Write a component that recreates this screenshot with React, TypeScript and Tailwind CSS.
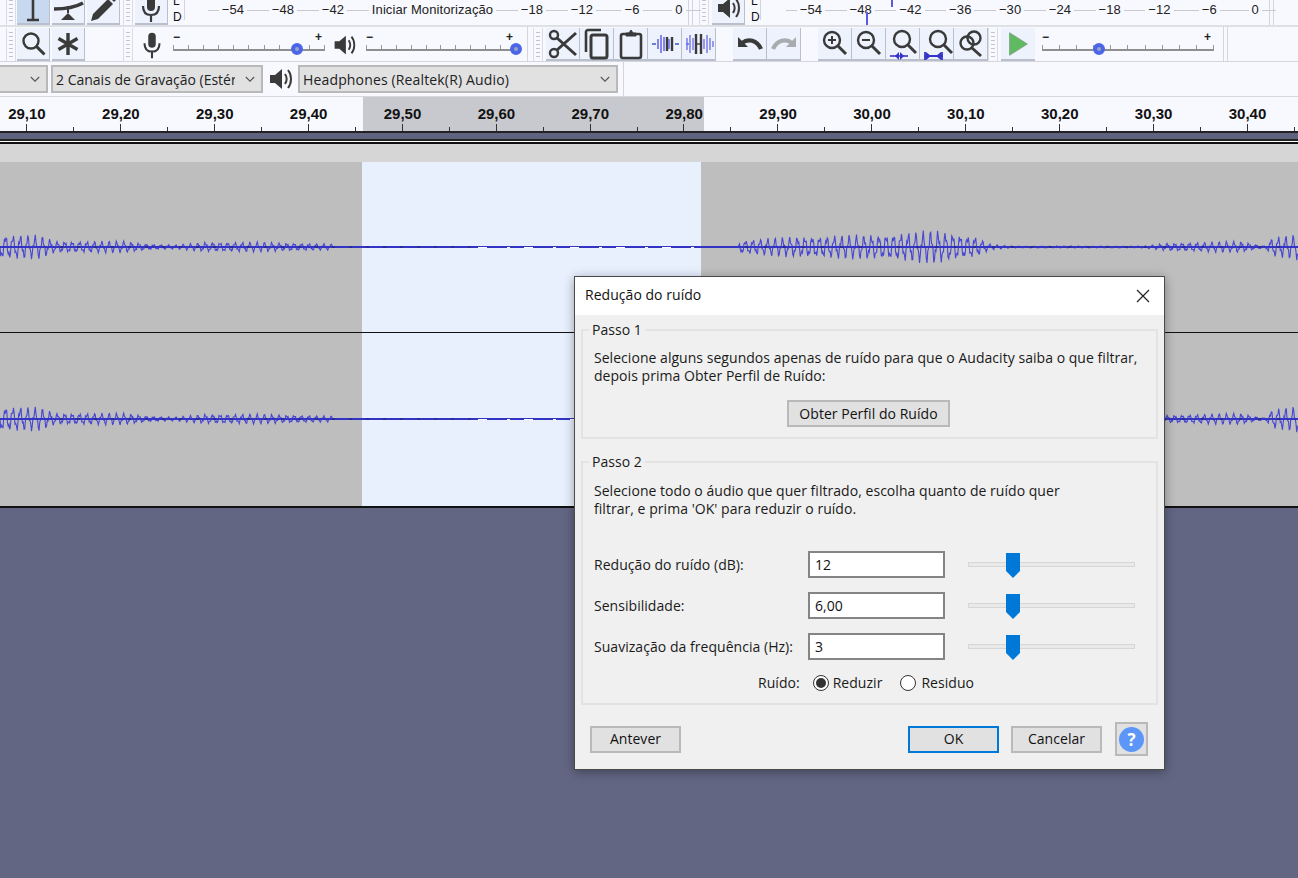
import type { ReactNode } from "react";

// ─── Toolbar bits ─────────────────────────────────────────────────────────────

const ink = "#3a3a3a";

function Grip() {
  return (
    <div className="w-[10px] h-[33px] shrink-0 border-x border-[#dcdde4] flex flex-col justify-center gap-[3px] px-[2px]">
      {[0, 1, 2, 3, 4, 5, 6].map((i) => (
        <div key={i} className="h-px bg-[#c4c5cb]" />
      ))}
    </div>
  );
}

function ToolBtn({ children, active, wide, className = "" }: { children?: ReactNode; active?: boolean; wide?: boolean; className?: string }) {
  return (
    <div
      className={`h-[33px] shrink-0 flex items-center justify-center border-b-2 border-r border-[#b9bfcc] ${wide ? "w-[34px]" : "w-[33px]"} ${
        active ? "bg-[#c8d8ef]" : "bg-[#edf2fd]"
      } ${className}`}
    >
      <svg viewBox="0 0 32 32" className="w-[32px] h-[32px]" fill="none" stroke={ink} strokeWidth="2.6">
        {children}
      </svg>
    </div>
  );
}

function DoubleLine({ className = "" }: { className?: string }) {
  return <div className={`w-[5px] h-full shrink-0 border-x border-[#d4d5da] ${className}`} />;
}

const micIcon = (
  <>
    <rect x="12" y="3" width="8" height="16" rx="4" fill={ink} stroke="none" />
    <path d="M8 14c0 6 3 9 8 9s8-3 8-9M16 23v7" strokeWidth="2.2" />
  </>
);

const speakerIcon = (
  <>
    <path d="M6 12h5l7-6v20l-7-6H6z" fill={ink} stroke="none" />
    <path d="M21 11c2 3 2 7 0 10M24 7c4 5 4 13 0 18" strokeWidth="2" />
  </>
);

function PlainIcon({ children, className = "" }: { children: ReactNode; className?: string }) {
  return (
    <svg viewBox="0 0 32 32" className={`shrink-0 ${className}`} fill="none" stroke={ink} strokeWidth="2.4">
      {children}
    </svg>
  );
}

function Glass({ cx = 14, cy = 13, r = 8 }: { cx?: number; cy?: number; r?: number }) {
  return (
    <>
      <circle cx={cx} cy={cy} r={r} strokeWidth="2.4" />
      <path d={`M${cx + r * 0.72} ${cy + r * 0.72}L${cx + r + 6} ${cy + r + 6}`} strokeWidth="3" />
    </>
  );
}

function ToolSlider({ width, thumb, ticks }: { width: string; thumb: string; ticks: number }) {
  return (
    <div className={`relative shrink-0 h-[33px] flex flex-col ${width}`}>
      <div className="flex justify-between text-[12px] leading-[14px] font-bold text-[#222] pt-[2px] pr-[3px] h-[16px] font-['Liberation_Sans',sans-serif]">
        <span>−</span>
        <span>+</span>
      </div>
      <div className="mt-[2px] h-[5px] flex justify-between items-end border-b-2 border-[#8f8f8f]">
        {Array.from({ length: ticks }).map((_, i) => (
          <div key={i} className="w-px h-[4px] bg-[#9a9a9a]" />
        ))}
      </div>
      <div className={`absolute top-[15px] w-[12px] h-[12px] rounded-full bg-[#4c66e8] border-[3px] border-[#4c66e8] flex items-center justify-center ${thumb}`}>
        <div className="w-[4px] h-[4px] rounded-full bg-[#9aa3c8]" />
      </div>
    </div>
  );
}

function ScaleCell({ label, className = "w-[50px]" }: { label: string; className?: string }) {
  return (
    <div className={`flex items-center shrink-0 ${className}`}>
      <div className="flex-1 h-px bg-[#c9cad0]" />
      <span className="px-[3px] whitespace-nowrap">{label}</span>
      <div className="flex-1 h-px bg-[#c9cad0]" />
    </div>
  );
}

function LD() {
  return (
    <div className="w-[9px] shrink-0 flex flex-col text-[12px] leading-[16px] text-[#111] font-['Liberation_Sans',sans-serif]">
      <span>L</span>
      <span>D</span>
    </div>
  );
}

function Combo({ text, className, textClass }: { text: string; className: string; textClass: string }) {
  return (
    <div className={`h-[28px] shrink-0 flex items-center justify-between bg-[#e1e1e1] border-2 border-[#b9b9b9] text-[14px] text-[#222] ${className}`}>
      <span className={`overflow-hidden whitespace-nowrap pl-[3px] ${textClass}`}>{text}</span>
      <svg viewBox="0 0 12 8" className="w-[10px] h-[7px] mr-[6px] shrink-0" fill="none" stroke="#555" strokeWidth="1.3">
        <path d="M1 1l5 5 5-5" />
      </svg>
    </div>
  );
}

// ─── Waveform ─────────────────────────────────────────────────────────────────

// envelope as [x, half height] pairs, read off the picture
const envelope: [number, number][] = [
  [0, 13], [40, 12], [55, 6], [125, 6], [150, 3], [175, 2], [205, 5], [260, 5], [333, 3], [334, 0],
  [738, 0], [740, 7], [800, 11], [880, 13], [935, 17], [975, 11], [990, 3], [1010, 1], [1145, 1],
  [1165, 4], [1240, 6], [1265, 1], [1272, 10], [1298, 13],
];

function envAt(x: number) {
  for (let i = 1; i < envelope.length; i++) {
    const [x1, y1] = envelope[i];
    if (x <= x1) {
      const [x0, y0] = envelope[i - 1];
      return y0 + ((y1 - y0) * (x - x0)) / (x1 - x0 || 1);
    }
  }
  return 0;
}

function wavePath(mid: number) {
  let d = `M0 ${mid}`;
  for (let x = 0; x < 1298; x += 0.75) {
    const env = envAt(x);
    const t = (x * Math.PI * 2) / 7.4;
    const s = 0.72 * Math.sin(t) + 0.3 * Math.sin(t * 3.1);
    d += `L${x} ${(mid + env * s).toFixed(1)}`;
  }
  return d;
}

function Channel({ mid, height }: { mid: number; height: number }) {
  return (
    <svg width="1298" height={height} className="block">
      <path d={wavePath(mid)} stroke="#4646d2" strokeWidth="1.1" fill="none" />
      <path d={`M0 ${mid}H1298`} stroke="#3434c4" strokeWidth="2" />
      <path d={`M60 ${mid}H480`} stroke="#22226a" strokeWidth="1" strokeDasharray="3 14" />
      <path d={`M478 ${mid + 0.5}H705`} stroke="#fff" strokeWidth="1" strokeDasharray="9 20 3 14" />
      <path d={`M745 ${mid}H1290`} stroke="#22226a" strokeWidth="1" strokeDasharray="3 16" />
    </svg>
  );
}

// ─── Dialog bits ──────────────────────────────────────────────────────────────

function DlgButton({ children, primary, className = "" }: { children: ReactNode; primary?: boolean; className?: string }) {
  return (
    <div
      className={`h-[27px] shrink-0 flex items-center justify-center bg-[#e1e1e1] border-2 text-[#111] ${
        primary ? "border-[#0078d7]" : "border-[#b9b9b9]"
      } ${className}`}
    >
      {children}
    </div>
  );
}

function Group({ title, className, children }: { title: string; className: string; children: ReactNode }) {
  return (
    <div className={`relative border-2 border-[#e3e3e3] pl-[11px] ${className}`}>
      <span className="absolute left-[6px] -top-[10px] px-[3px] bg-[#f0f0f0] leading-[18px]">{title}</span>
      {children}
    </div>
  );
}

function ParamRow({ label, value }: { label: string; value: string }) {
  return (
    <div className="flex items-center h-[27px]">
      <span className="w-[214px] shrink-0 whitespace-nowrap">{label}</span>
      <div className="w-[137px] h-[27px] shrink-0 bg-white border-2 border-[#858585] pl-[5px] flex items-center text-[#111]">{value}</div>
      <div className="relative ml-[23px] w-[167px] h-[27px] flex items-center">
        <div className="w-full h-[5px] bg-[#e7eae7] border border-[#d6d6d6]" />
        <svg viewBox="0 0 14 25" className="absolute left-[38px] top-[2px] w-[14px] h-[25px]">
          <path d="M0 0h14v18l-7 7-7-7z" fill="#0078d7" />
        </svg>
      </div>
    </div>
  );
}

function Radio({ on }: { on?: boolean }) {
  return (
    <div className="w-[16px] h-[16px] shrink-0 rounded-full bg-white border border-[#333] flex items-center justify-center">
      {on && <div className="w-[10px] h-[10px] rounded-full bg-[#333]" />}
    </div>
  );
}

// ─── Page ─────────────────────────────────────────────────────────────────────

const rulerLabels = ["29,10", "29,20", "29,30", "29,40", "29,50", "29,60", "29,70", "29,80", "29,90", "30,00", "30,10", "30,20", "30,30", "30,40"];

export default function App() {
  return (
    <div className="relative w-[1298px] h-[878px] overflow-hidden bg-[#626683] font-['Open_Sans',sans-serif]">
      {/* Row 1: tools and meters, cut off by the top of the screenshot */}
      <div className="h-[27px] bg-[#f8f9ff] border-b-2 border-[#dfe0e4] flex items-end overflow-hidden pl-[6px]">
        <Grip />
        <ToolBtn active className="ml-px">
          <path d="M10 28h12M16 0v28" />
        </ToolBtn>
        <ToolBtn className="ml-[2px]">
          <path d="M2 17c10 0 20-1 29-6" strokeWidth="3.4" />
          <path d="M16 21l7 7H9z" fill={ink} stroke="none" />
          <path d="M16 14v7" strokeWidth="2" />
        </ToolBtn>
        <ToolBtn className="ml-[2px]">
          <path d="M6 22l15-15 5 5-15 15-7 2z" fill={ink} stroke="none" />
          <path d="M22 5l3-3 5 5-3 3z" fill={ink} stroke="none" />
        </ToolBtn>
        <div className="ml-[3px]"><Grip /></div>
        <ToolBtn className="ml-[2px]">{micIcon}</ToolBtn>
        <div className="ml-[5px]"><LD /></div>
        <div className="relative w-[504px] h-[25px] shrink-0 ml-[2px] text-[13px] tracking-[0.1px] leading-[16px] text-[#222] font-['Liberation_Sans',sans-serif]">
          <div className="h-[20px] flex pl-[23px] border-l border-[#d4d5da]">
            <ScaleCell label="−54" />
            <ScaleCell label="−48" />
            <ScaleCell label="−42" />
            <ScaleCell label="Iniciar Monitorização" className="w-[149px]" />
            <ScaleCell label="−18" />
            <ScaleCell label="−12" />
            <ScaleCell label="−6" />
            <ScaleCell label="0" className="w-[44px]" />
          </div>
        </div>
        <DoubleLine />
        <div className="ml-[6px]"><Grip /></div>
        <ToolBtn className="ml-[3px]">{speakerIcon}</ToolBtn>
        <div className="ml-[6px]"><LD /></div>
        <div className="relative w-[502px] h-[25px] shrink-0 text-[13px] tracking-[0.1px] leading-[16px] text-[#222] font-['Liberation_Sans',sans-serif]">
          <div className="h-[20px] flex pl-[25px] border-l border-[#d4d5da]">
            {["−54", "−48", "−42", "−36", "−30", "−24", "−18", "−12", "−6"].map((l) => (
              <ScaleCell key={l} label={l} className="w-[49.8px]" />
            ))}
            <ScaleCell label="0" className="w-[42px]" />
          </div>
          <div className="absolute left-[106px] top-[12px] w-[2px] h-[13px] bg-[#5a5ae6]" />
          <div className="absolute left-[131px] top-0 w-[2px] h-[7px] bg-[#5a5ae6]" />
        </div>
        <div className="ml-[7px] h-full"><DoubleLine /></div>
      </div>

      {/* Row 2: tools, sliders, edit and zoom */}
      <div className="h-[35px] bg-[#f8f9ff] border-b border-[#d6d7dc] flex items-end pl-[6px]">
        <Grip />
        <ToolBtn className="ml-px">
          <Glass cx={14} cy={13} r={7.5} />
        </ToolBtn>
        <ToolBtn className="ml-[2px]">
          <path d="M16 5v22M6.5 10.5l19 11M25.5 10.5l-19 11" strokeWidth="3.4" />
        </ToolBtn>
        <div className="ml-[38px]"><Grip /></div>
        <PlainIcon className="w-[30px] h-[30px] ml-[4px] mb-px">{micIcon}</PlainIcon>
        <ToolSlider width="w-[152px] ml-[6px]" thumb="left-[118px]" ticks={11} />
        <PlainIcon className="w-[30px] h-[30px] ml-[4px] mb-px">{speakerIcon}</PlainIcon>
        <ToolSlider width="w-[150px] ml-[7px]" thumb="left-[144px]" ticks={11} />
        <div className="w-px h-full bg-[#d4d5da] ml-[11px]" />
        <div className="ml-[5px]"><Grip /></div>
        <ToolBtn wide className="ml-[3px]">
          <circle cx="7" cy="25" r="4" strokeWidth="2.4" />
          <circle cx="7" cy="7" r="4" strokeWidth="2.4" />
          <path d="M10 10l19 17M10 22L29 5" strokeWidth="3" />
        </ToolBtn>
        <ToolBtn wide>
          <path d="M5 24V4c0-1 1-2 2-2h13" />
          <rect x="10" y="7" width="16" height="23" rx="2" strokeWidth="3" />
        </ToolBtn>
        <ToolBtn wide>
          <rect x="6" y="6" width="20" height="24" rx="2" strokeWidth="2.6" />
          <path d="M11 8V5h3l2-3 2 3h3v3z" fill={ink} strokeWidth="1" />
        </ToolBtn>
        <ToolBtn wide>
          <path d="M3 16h4M26 16h4" stroke="#3f57c8" strokeWidth="1.6" />
          <path d="M9 11v10M12 7v18M15 9v14" stroke="#5a5ae6" strokeWidth="1.4" />
          <path d="M18 9v14M23 9v14" stroke={ink} strokeWidth="2.4" />
          <path d="M20 11v10" stroke="#5a5ae6" strokeWidth="1.4" />
        </ToolBtn>
        <ToolBtn wide>
          <path d="M3 16h3M4 10v12M7 7v18M10 10v12M21 11v10M24 7v18M27 10v12M30 13v6" stroke="#6a6ae8" strokeWidth="1.3" />
          <path d="M13 6v20M18 6v20" stroke={ink} strokeWidth="2.4" />
          <path d="M13 16h5" stroke={ink} strokeWidth="1.4" />
        </ToolBtn>
        <ToolBtn wide className="ml-[17px]">
          <path d="M4 9v10h10z" fill={ink} stroke="none" />
          <path d="M8 15c6-5 15-3 19 6" strokeWidth="4.2" />
        </ToolBtn>
        <ToolBtn wide>
          <path d="M28 9v10H18z" fill="#a9abaf" stroke="none" />
          <path d="M24 15c-6-5-15-3-19 6" strokeWidth="4.2" stroke="#a9abaf" />
        </ToolBtn>
        <ToolBtn wide className="ml-[17px]">
          <Glass cx={13} cy={12} r={8} />
          <path d="M9 12h8M13 8v8" strokeWidth="2" />
        </ToolBtn>
        <ToolBtn wide>
          <Glass cx={13} cy={12} r={8} />
          <path d="M9 12h8" strokeWidth="2" />
        </ToolBtn>
        <ToolBtn wide>
          <Glass cx={15} cy={11} r={8} />
          <path d="M3 28h18" stroke="#3434c8" strokeWidth="1.6" />
          <path d="M12 24l-4 4 4 4zM13 24l4 4-4 4z" fill="#3434c8" stroke="none" />
        </ToolBtn>
        <ToolBtn wide>
          <Glass cx={17} cy={11} r={8} />
          <path d="M4 28h18M4 24v8M21 24v8" stroke="#3434c8" strokeWidth="1.8" />
          <path d="M5 24l5 4-5 4zM20 24l-5 4 5 4z" fill="#3434c8" stroke="none" />
        </ToolBtn>
        <ToolBtn wide>
          <circle cx="19" cy="10" r="6.5" strokeWidth="2.4" />
          <circle cx="12" cy="15" r="6.5" strokeWidth="2.4" />
          <path d="M17 20l9 8" strokeWidth="3" />
        </ToolBtn>
        <Grip />
        <div className="ml-[3px] w-[34px] h-[33px] shrink-0 flex items-center justify-center bg-[#edf2fd] border-b-2 border-[#b9bfcc]">
          <svg viewBox="0 0 32 32" className="w-[30px] h-[30px]">
            <path d="M7 4l19 12L7 28z" fill="#5fba62" stroke="#86a888" strokeWidth="1" />
          </svg>
        </div>
        <ToolSlider width="w-[172px] ml-[7px]" thumb="left-[51px]" ticks={11} />
        <div className="ml-[9px] h-full"><DoubleLine /></div>
      </div>

      {/* Row 3: device selectors */}
      <div className="h-[35px] bg-[#f8f9ff] border-b border-[#d6d7dc] flex items-center">
        <Combo text="" className="w-[48px] border-l-0" textClass="w-0" />
        <Combo text="2 Canais de Gravação (Estéreo)" className="w-[212px] ml-[3px]" textClass="w-[182px]" />
        <PlainIcon className="ml-px w-[32px] h-[32px]">{speakerIcon}</PlainIcon>
        <Combo text="Headphones (Realtek(R) Audio)" className="w-[320px] ml-[2px]" textClass="w-[290px] tracking-[0.15px]" />
        <div className="w-px h-full bg-[#d4d5da] ml-[5px]" />
      </div>

      {/* Ruler */}
      <div className="h-[34px] overflow-hidden bg-[linear-gradient(to_right,#f8f9ff_363px,#c8c9ce_363px,#c8c9ce_704px,#f8f9ff_704px)] flex flex-col">
        <div className="flex -ml-[20px] h-[26px] items-end text-[15px] leading-[18px] font-bold text-[#111] font-['Liberation_Sans',sans-serif]">
          {rulerLabels.map((l) => (
            <div key={l} className="w-[93.9px] shrink-0 text-center">{l}</div>
          ))}
        </div>
        <div className="flex ml-[3.4px] h-[8px] items-end">
          {rulerLabels.map((l) => (
            <div key={l} className="flex shrink-0 items-end">
              <div className="w-[46.95px] flex justify-center"><div className="w-px h-[7px] bg-[#333]" /></div>
              <div className="w-[46.95px] flex justify-center"><div className="w-px h-[4px] bg-[#333]" /></div>
            </div>
          ))}
        </div>
      </div>

      {/* Band between ruler and track */}
      <div className="h-[2px] bg-[#222]" />
      <div className="h-[6px] bg-[#5f6380]" />
      <div className="h-[2px] bg-[#222]" />
      <div className="h-px bg-white" />
      <div className="h-[2px] bg-[#111]" />
      <div className="h-[18px] bg-[#d6d6d6]" />

      {/* Track with selection */}
      <div className="bg-[linear-gradient(to_right,#bebebe_362px,#e8f0fe_362px,#e8f0fe_701px,#bebebe_701px)]">
        <Channel mid={85} height={170} />
        <div className="h-px bg-[#111]" />
        <Channel mid={86} height={173} />
      </div>
      <div className="h-[2px] bg-[#111]" />

      {/* Dialog */}
      <div className="absolute left-[574px] top-[276px] w-[591px] h-[494px] border border-[#4a4a4a] bg-[#f0f0f0] shadow-[0_2px_10px_rgba(0,0,0,0.35)] flex flex-col text-[14px] leading-[18px] tracking-[0.04px] text-[#1a1a1a]">
        <div className="h-[38px] shrink-0 bg-white flex items-center justify-between pl-[10px] pr-[14px]">
          <span className="text-[#111] -mt-[2px]">Redução do ruído</span>
          <svg viewBox="0 0 14 14" className="w-[14px] h-[14px]" fill="none" stroke="#222" strokeWidth="1.2">
            <path d="M1 1l12 12M13 1L1 13" />
          </svg>
        </div>
        <div className="flex-1 px-[6px] pt-[14px] flex flex-col">
          <Group title="Passo 1" className="h-[110px] pt-[18px]">
            <p>Selecione alguns segundos apenas de ruído para que o Audacity saiba o que filtrar,</p>
            <p>depois prima Obter Perfil de Ruído:</p>
            <DlgButton className="w-[163px] mt-[15px] ml-[193px]">Obter Perfil do Ruído</DlgButton>
          </Group>
          <Group title="Passo 2" className="h-[244px] mt-[22px] pt-[19px]">
            <p>Selecione todo o áudio que quer filtrado, escolha quanto de ruído quer</p>
            <p>filtrar, e prima 'OK' para reduzir o ruído.</p>
            <div className="mt-[33px] flex flex-col gap-[14px]">
              <ParamRow label="Redução do ruído (dB):" value="12" />
              <ParamRow label="Sensibilidade:" value="6,00" />
              <ParamRow label="Suavização da frequência (Hz):" value="3" />
            </div>
            <div className="flex items-center h-[18px] mt-[14px] pl-[164px]">
              <span>Ruído:</span>
              <div className="ml-[13px]"><Radio on /></div>
              <span className="ml-[4px]">Reduzir</span>
              <div className="ml-[18px]"><Radio /></div>
              <span className="ml-[5px]">Residuo</span>
            </div>
          </Group>
          <div className="mt-[17px] h-[34px] flex items-center pl-[9px] pr-[10px]">
            <DlgButton className="w-[91px]">Antever</DlgButton>
            <DlgButton primary className="w-[91px] ml-auto">OK</DlgButton>
            <DlgButton className="w-[91px] ml-[12px]">Cancelar</DlgButton>
            <div className="ml-[13px] w-[33px] h-[34px] shrink-0 bg-[#e1e1e1] border-2 border-[#b9b9b9] flex items-center justify-center">
              <div className="w-[25px] h-[25px] rounded-full bg-[#5c96f8] flex items-center justify-center text-white font-bold text-[17px] leading-none">?</div>
            </div>
          </div>
        </div>
      </div>
    </div>
  );
}
